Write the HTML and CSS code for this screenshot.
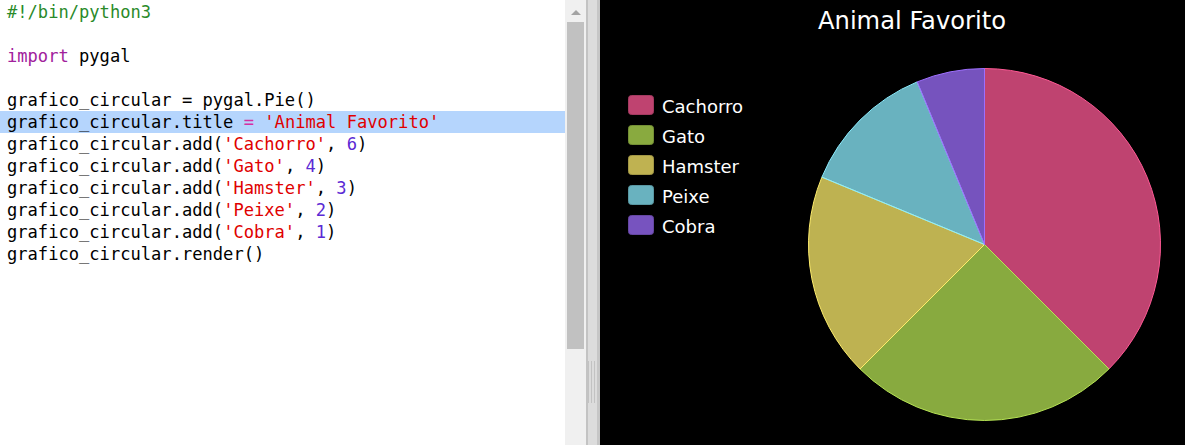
FILE: index.html
```html
<!DOCTYPE html>
<html>
<head>
<meta charset="utf-8">
<link rel="stylesheet" href="styles.css">
</head>
<body>
<div class="app">
  <div class="editor">
    <div class="code">
      <div class="line"><span class="cm">#!/bin/python3</span></div>
      <div class="line"></div>
      <div class="line"><span class="kw">import</span> pygal</div>
      <div class="line"></div>
      <div class="line">grafico_circular = pygal.Pie()</div>
      <div class="line hl">grafico_circular.title <span class="op">=</span> <span class="st">'Animal Favorito'</span></div>
      <div class="line">grafico_circular.add(<span class="st">'Cachorro'</span>, <span class="nu">6</span>)</div>
      <div class="line">grafico_circular.add(<span class="st">'Gato'</span>, <span class="nu">4</span>)</div>
      <div class="line">grafico_circular.add(<span class="st">'Hamster'</span>, <span class="nu">3</span>)</div>
      <div class="line">grafico_circular.add(<span class="st">'Peixe'</span>, <span class="nu">2</span>)</div>
      <div class="line">grafico_circular.add(<span class="st">'Cobra'</span>, <span class="nu">1</span>)</div>
      <div class="line">grafico_circular.render()</div>
    </div>
  </div>
  <div class="scrollbar">
    <div class="arrow"><span class="tri"></span></div>
    <div class="thumb"></div>
  </div>
  <div class="divider">
    <div class="grip"></div>
  </div>
  <div class="chart">
    <svg class="chart-svg" width="585" height="445" viewBox="0 0 585 445">
      <text class="title" x="312" y="29" text-anchor="middle">Animal Favorito</text>
      <g class="legend">
        <rect x="28.5" y="95.5" width="25" height="19" rx="3" fill="#bf4370" stroke="#a33a60"/>
        <text x="62" y="113">Cachorro</text>
        <rect x="28.5" y="125.5" width="25" height="19" rx="3" fill="#89aa3f" stroke="#748f35"/>
        <text x="62" y="143">Gato</text>
        <rect x="28.5" y="155.5" width="25" height="19" rx="3" fill="#bfb251" stroke="#a29745"/>
        <text x="62" y="173">Hamster</text>
        <rect x="28.5" y="185.5" width="25" height="19" rx="3" fill="#69b2bf" stroke="#5997a2"/>
        <text x="62" y="203">Peixe</text>
        <rect x="28.5" y="215.5" width="25" height="19" rx="3" fill="#7753bf" stroke="#6547a2"/>
        <text x="62" y="233">Cobra</text>
      </g>
      <g class="pie">
        <path d="M384.5 244.5 L384.5 68.5 A176 176 0 0 1 508.95 368.95 Z" fill="#ff5995" fill-opacity="0.75" stroke="#ff5995"/>
        <path d="M384.5 244.5 L508.95 368.95 A176 176 0 0 1 260.05 368.95 Z" fill="#b6e354" fill-opacity="0.75" stroke="#b6e354"/>
        <path d="M384.5 244.5 L260.05 368.95 A176 176 0 0 1 221.9 177.15 Z" fill="#feed6c" fill-opacity="0.75" stroke="#feed6c"/>
        <path d="M384.5 244.5 L221.9 177.15 A176 176 0 0 1 317.15 81.9 Z" fill="#8cedff" fill-opacity="0.75" stroke="#8cedff"/>
        <path d="M384.5 244.5 L317.15 81.9 A176 176 0 0 1 384.5 68.5 Z" fill="#9e6ffe" fill-opacity="0.75" stroke="#9e6ffe"/>
      </g>
    </svg>
  </div>
</div>
</body>
</html>
```

FILE: styles.css
```css
html, body {
  margin: 0;
  padding: 0;
  background: #000;
}
.app {
  display: flex;
  width: 1185px;
  height: 445px;
  overflow: hidden;
}
.editor {
  width: 565px;
  height: 445px;
  background: #fff;
  flex: none;
}
.code {
  padding-top: 1px;
  font-family: "DejaVu Sans Mono", "Liberation Mono", monospace;
  font-size: 17.1px;
  color: #000;
}
.line {
  height: 22px;
  line-height: 22px;
  padding-left: 7px;
  white-space: pre;
}
.line.hl {
  background: #b5d5fd;
}
.cm { color: #2a8a2a; }
.kw { color: #a1219c; }
.st { color: #e00000; }
.nu { color: #5b2ad4; }
.op { color: #d52ea3; }
.scrollbar {
  width: 21px;
  height: 445px;
  background: #f0f0f0;
  flex: none;
  display: flex;
  flex-direction: column;
}
.arrow {
  height: 22px;
  display: flex;
  justify-content: center;
  padding-top: 10px;
  box-sizing: border-box;
}
.tri {
  width: 0;
  height: 0;
  border-left: 5px solid transparent;
  border-right: 5px solid transparent;
  border-bottom: 5px solid #a3a3a3;
  margin-left: 1px;
}
.thumb {
  margin: 0 2px;
  height: 327px;
  background: #c1c1c1;
}
.divider {
  width: 14px;
  height: 445px;
  flex: none;
  background: #dcdcdc;
  border-left: 2px solid #c3c3c3;
  border-right: 3px solid #c6c6c6;
  box-sizing: border-box;
  padding-top: 361px;
}
.grip {
  width: 8px;
  height: 42px;
  background: repeating-linear-gradient(to right, #c2c2c2 0 1px, #dcdcdc 1px 3px);
}
.chart {
  width: 585px;
  height: 445px;
  background: #000;
  flex: none;
}
.chart-svg {
  display: block;
}
.title {
  font-family: "DejaVu Sans", "Noto Sans", sans-serif;
  font-size: 24.2px;
  fill: #fff;
}
.legend text {
  font-family: "DejaVu Sans", "Noto Sans", sans-serif;
  font-size: 18px;
  fill: #fff;
}
```
